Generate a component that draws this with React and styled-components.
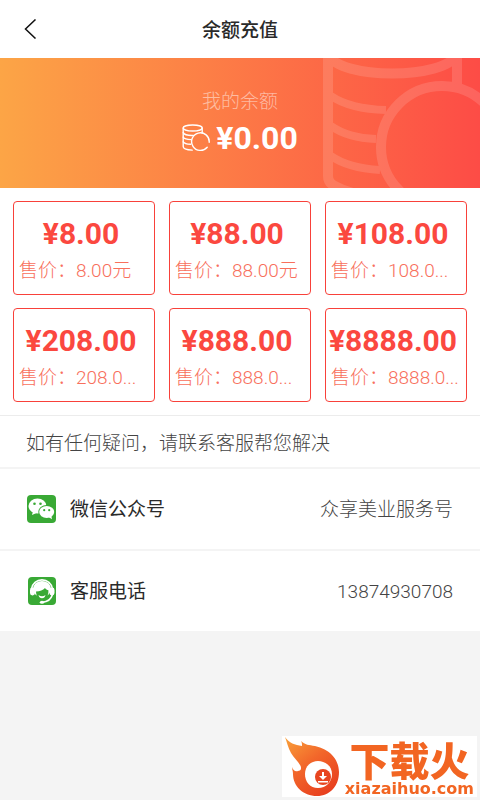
import React from 'react'
import styled, { createGlobalStyle } from 'styled-components'

const GlobalStyle = createGlobalStyle`
*{
  box-sizing: border-box;
}
body{
  margin: 0;
  background-color: #f4f4f4;
  color: #2a2a2a;
  font-family: Roboto, "Noto Sans CJK SC", sans-serif;
  font-size: 19px;
  line-height: 28px;
}
h1, h2, p, dl, dd{
  margin: 0;
  font-weight: 400;
}
`
const Page = styled.div`
min-height: 100vh;
display: flex;
flex-direction: column;
`
const Header = styled.header`
display: grid;
grid-template-columns: 60px 1fr 60px;
align-items: center;
height: 58px;
background-color: #fff;
`
const BackButton = styled.button`
display: flex;
align-items: center;
height: 58px;
padding: 0 0 0 24px;
border: none;
background: none;
cursor: pointer;
`
const Title = styled.h1`
padding-top: 3px;
font-size: 19px;
font-weight: 500;
text-align: center;
`
const Banner = styled.section`
position: relative;
display: flex;
flex-direction: column;
align-items: center;
height: 130px;
padding-top: 30px;
background: linear-gradient(90deg, #fca546 0%, #fd4c46 100%);
color: #fff;
`
const BannerArt = styled.svg`
position: absolute;
top: 0;
right: 0;
`
const BannerLabel = styled.h2`
font-size: 19px;
font-weight: 300;
color: rgba(255, 255, 255, 0.5);
`
const Balance = styled.p`
display: flex;
align-items: center;
gap: 6px;
margin-top: 4px;
font-size: 32px;
font-weight: 700;
line-height: 36px;
`
const Plans = styled.section`
display: grid;
grid-template-columns: repeat(3, 1fr);
gap: 13px 14px;
padding: 13px;
background-color: #fff;
`
const PlanCard = styled.button`
display: flex;
flex-direction: column;
align-items: center;
min-width: 0;
height: 94px;
padding: 14px 11px 0 5px;
border: 1px solid #f8413a;
border-radius: 4px;
background-color: #fff;
font-family: inherit;
cursor: pointer;
`
const Amount = styled.span`
font-size: 30px;
font-weight: 700;
line-height: 36px;
color: #fb483f;
white-space: nowrap;
`
const Price = styled.span`
width: 100%;
margin-top: 5px;
font-size: 19px;
font-weight: 300;
line-height: 28px;
color: #f86f5c;
text-align: left;
white-space: nowrap;
`
const Notice = styled.p`
padding: 14px 26px 9px;
border-top: 1px solid #ececec;
background-color: #fff;
font-weight: 300;
color: #444;
`
const Contacts = styled.dl`
display: flex;
flex-direction: column;
`
const ContactRow = styled.div`
display: flex;
align-items: center;
justify-content: space-between;
height: 82px;
padding: 0 27px 0 26px;
border-top: 2px solid #f4f4f4;
background-color: #fff;
`
const ContactName = styled.dt`
display: flex;
align-items: center;
gap: 13px;
`
const ContactText = styled.span`
padding-top: 2px;
`
const ContactValue = styled.dd`
padding-top: 2px;
font-weight: 300;
color: #444;
`
const SiteMark = styled.a`
position: fixed;
right: 3px;
bottom: 3px;
display: flex;
align-items: center;
justify-content: space-between;
width: 195px;
height: 61px;
padding-right: 3px;
background-color: #fff;
color: #f26522;
text-decoration: none;
`
const SiteText = styled.span`
display: flex;
flex-direction: column;
align-items: center;
`
const SiteName = styled.span`
font-family: "Noto Sans CJK SC", sans-serif;
font-size: 40px;
font-weight: 900;
line-height: 44px;
`
const SiteUrl = styled.span`
font-family: "DejaVu Sans", sans-serif;
font-size: 16px;
font-weight: 700;
line-height: 16px;
`

const plans = [
  { amount: '8.00', price: '8.00元' },
  { amount: '88.00', price: '88.00元' },
  { amount: '108.00', price: '108.0...' },
  { amount: '208.00', price: '208.0...' },
  { amount: '888.00', price: '888.0...' },
  { amount: '8888.00', price: '8888.0...' },
]

const CoinsIcon = () => (
  <svg width="28" height="28" viewBox="0 0 28 28" fill="none" stroke="#fff" strokeWidth="1.4" strokeLinecap="round" aria-hidden="true">
    <ellipse cx="10.7" cy="4" rx="9.5" ry="3" />
    <path d="M1.2 4v18.5c0 2.3 4 3.4 9 3.6M20.2 4v5" />
    <path d="M1.2 8.6c1 2 5 3 10.2 2.8M1.2 13.2c1 1.6 4 2.4 7.8 2.4M1.2 17.8c1 1.6 4 2.3 7.4 2.4" />
    <path d="M25.2 23.2a8.8 8.8 0 1 1 2-5" />
  </svg>
)

const BannerCoins = () => (
  <BannerArt width="160" height="130" viewBox="0 0 160 130" fill="none" stroke="#fff" strokeWidth="10" opacity="0.13" aria-hidden="true">
    <path d="M8 -6V118q0 7 7 10q14 8 36 10" />
    <path d="M8 -4C18 22 126 22 137 -4" />
    <path d="M137 -6V30" />
    <path d="M11 38Q30 51 66 52M11 68Q28 80 56 81M11 98Q28 110 60 112" strokeWidth="8" />
    <circle cx="122" cy="89" r="61" />
  </BannerArt>
)

const WechatIcon = () => (
  <svg width="31" height="30" viewBox="0 0 31 30" aria-hidden="true">
    <rect x="1" y="1" width="29" height="28" rx="4" fill="#39a935" />
    <path d="M7 17l-1 4 4.5-2z" fill="#fff" />
    <ellipse cx="11.5" cy="12" rx="9" ry="7.6" fill="#fff" />
    <ellipse cx="20.7" cy="18" rx="8.4" ry="7" fill="#39a935" />
    <ellipse cx="20.7" cy="18" rx="7.5" ry="6.1" fill="#fff" />
    <path d="M22.5 23l3.5 2.3-.8-4z" fill="#fff" />
    <g fill="#39a935">
      <circle cx="8.5" cy="9.8" r="1.3" />
      <circle cx="14.5" cy="9.8" r="1.3" />
      <circle cx="18.2" cy="16.2" r="1.1" />
      <circle cx="23.2" cy="16.2" r="1.1" />
    </g>
  </svg>
)

const ServiceIcon = () => (
  <svg width="31" height="30" viewBox="0 0 31 30" aria-hidden="true">
    <rect x="2" y="1" width="28" height="28" rx="4" fill="#39a935" />
    <path d="M5.5 13a10.6 10.6 0 0 1 21 0" fill="none" stroke="#fff" strokeWidth="1.6" />
    <ellipse cx="16" cy="13" rx="9" ry="8" fill="#fff" />
    <path d="M10 15.5c4-.2 7-1.2 9-3.5 1 1.4 2 2 3.400 2.300.4 5.500-2.600 9.200-6.200 9.200s-6-3.200-6.200-8z" fill="#39a935" />
    <path d="M12.5 19q3.5 2.6 7 0q-.8 3.2-3.5 3.2t-3.5-3.2z" fill="#fff" />
    <rect x="4" y="11.5" width="5" height="8" rx="2.4" fill="#fff" />
    <rect x="23.5" y="11.5" width="5" height="8" rx="2.4" fill="#fff" />
    <path d="M26.5 18.5c-1.5 4.8-5 7.5-10 7.7" fill="none" stroke="#fff" strokeWidth="1.6" />
    <ellipse cx="16" cy="26.2" rx="2.2" ry="1.5" fill="#fff" />
  </svg>
)

const FlameLogo = () => (
  <svg width="60" height="61" viewBox="0 0 60 61" aria-hidden="true">
    <defs>
      <linearGradient id="flame" x1="0" y1="0" x2="0.7" y2="1">
        <stop offset="0" stopColor="#f9a13a" />
        <stop offset="0.5" stopColor="#f2662a" />
        <stop offset="1" stopColor="#e8401f" />
      </linearGradient>
    </defs>
    <path d="M3 1c4 6 10 8 17 9 0-2 0-3-1-5 4 4 8 4 14 5 14 3 24 13 24 26 0 14-9 24-22 24-14 0-24-10-24-22 0-3-1-5-1-7 1 3 3 5 6 4 3 0 4-3 2-6-2-4-6-7-9-12C6 12 5 6 3 1z" fill="url(#flame)" />
    <path d="M23 38c0-8 6-13 13-13s14 5 14 13-6 14-14 14-13-6-13-14z" fill="#fff" />
    <circle cx="41" cy="41" r="8" fill="#e8451f" />
    <path d="M40 36h2v4h3l-4 4-4-4h3zM36 45h10v1.5H36z" fill="#fff" />
  </svg>
)

const App = () => {
  return (
    <Page>
      <GlobalStyle />
      <Header>
        <BackButton type="button" aria-label="返回">
          <svg width="13" height="20" viewBox="0 0 13 20" fill="none" stroke="#111" strokeWidth="1.5" aria-hidden="true">
            <path d="M11.5 0.5L1.5 10L11.5 19.5" />
          </svg>
        </BackButton>
        <Title>余额充值</Title>
      </Header>

      <Banner>
        <BannerCoins />
        <BannerLabel>我的余额</BannerLabel>
        <Balance><CoinsIcon />¥0.00</Balance>
      </Banner>

      <Plans>
        {plans.map(plan => (
          <PlanCard type="button" key={plan.amount}>
            <Amount>¥{plan.amount}</Amount>
            <Price>售价：{plan.price}</Price>
          </PlanCard>
        ))}
      </Plans>

      <Notice>如有任何疑问，请联系客服帮您解决</Notice>

      <Contacts>
        <ContactRow>
          <ContactName><WechatIcon /><ContactText>微信公众号</ContactText></ContactName>
          <ContactValue>众享美业服务号</ContactValue>
        </ContactRow>
        <ContactRow>
          <ContactName><ServiceIcon /><ContactText>客服电话</ContactText></ContactName>
          <ContactValue>13874930708</ContactValue>
        </ContactRow>
      </Contacts>

      <SiteMark href="#">
        <FlameLogo />
        <SiteText>
          <SiteName>下载火</SiteName>
          <SiteUrl>xiazaihuo.com</SiteUrl>
        </SiteText>
      </SiteMark>
    </Page>
  )
}

export default App
